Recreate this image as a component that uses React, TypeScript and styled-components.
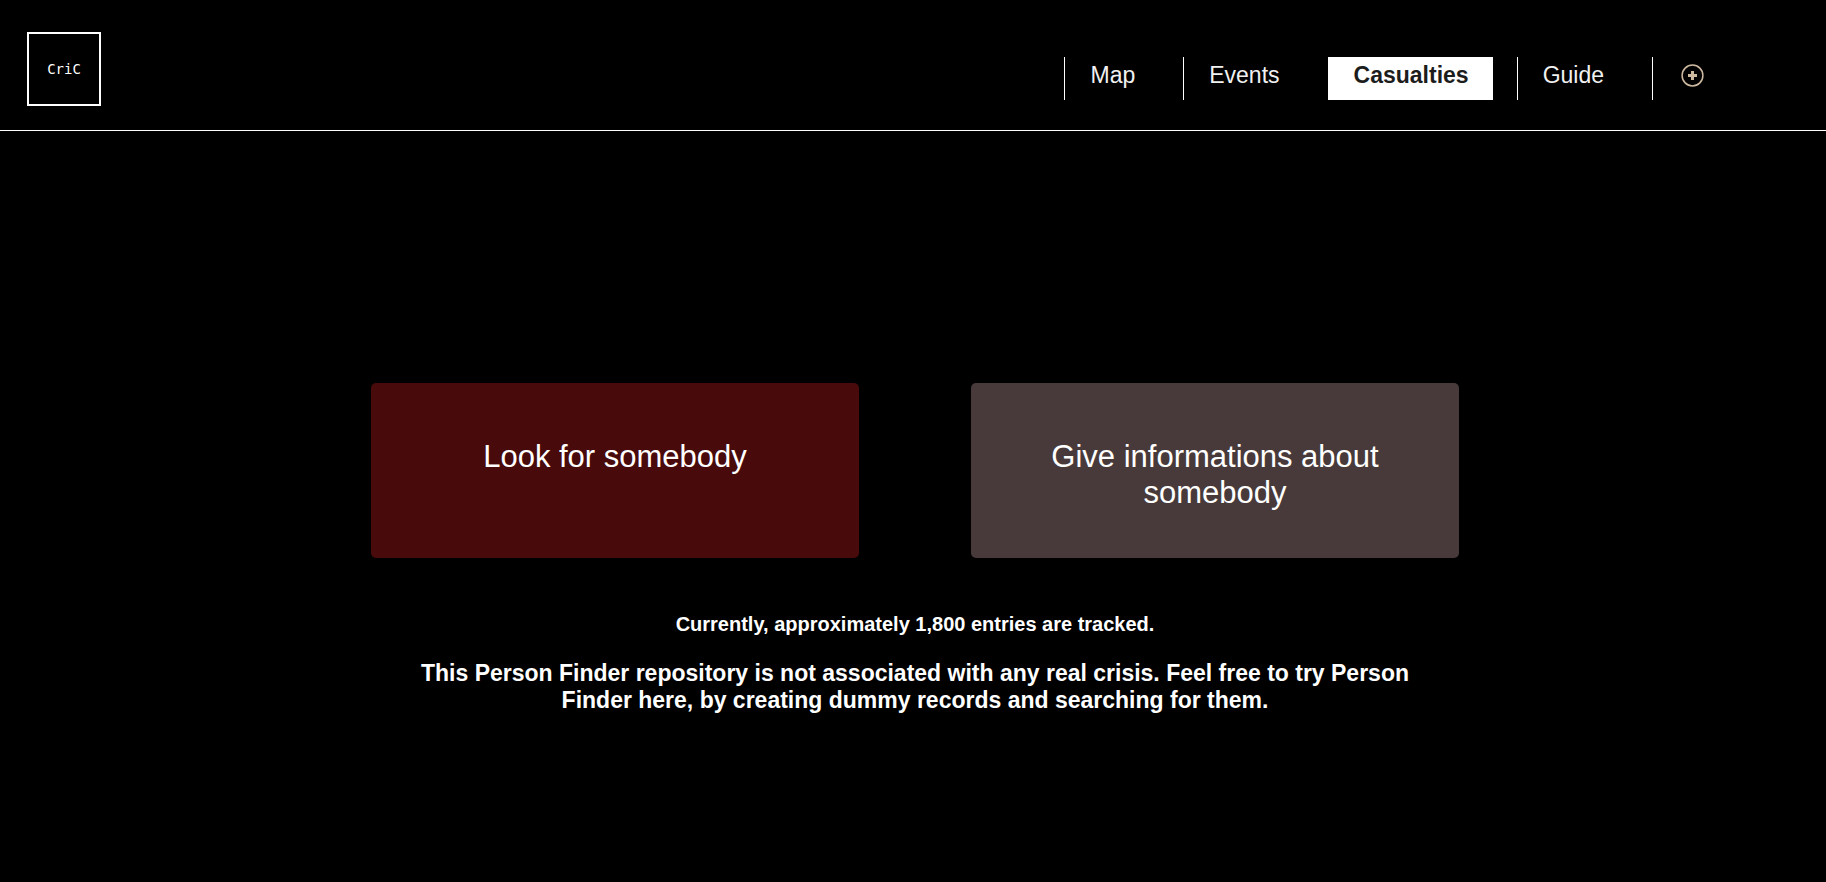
import React from 'react';
import styled, { createGlobalStyle } from 'styled-components';

const GlobalStyle = createGlobalStyle`
  *, *::before, *::after { box-sizing: border-box; }
  body {
    margin: 0;
    background: #000;
    color: #fff;
    font-family: Arial, 'Liberation Sans', sans-serif;
  }
`;

const Page = styled.div`
  display: flex;
  flex-direction: column;
  min-height: 100vh;
`;

const Header = styled.header`
  display: flex;
  justify-content: space-between;
  align-items: flex-start;
  padding: 32px 98px 24px 27px;
  border-bottom: 1px solid #fff;
`;

const Logo = styled.a`
  display: flex;
  align-items: center;
  justify-content: center;
  width: 74px;
  height: 74px;
  border: 2px solid #fff;
  color: #fff;
  font: 14px/16px 'DejaVu Sans Mono', monospace;
  text-decoration: none;
`;

const NavList = styled.ul`
  display: flex;
  gap: 24px;
  margin: 25px 0 0;
  padding: 0;
  list-style: none;
`;

const NavLink = styled.a<{ $active?: boolean }>`
  display: block;
  height: 43px;
  padding: 5px 24px 0 25px;
  border-left: 1px solid #fff;
  background: ${(p) => (p.$active ? '#fff' : 'transparent')};
  color: ${(p) => (p.$active ? '#1c1c1c' : '#f1f1f1')};
  font-size: 23px;
  font-weight: ${(p) => (p.$active ? 700 : 400)};
  line-height: 26px;
  text-decoration: none;
`;

const AddIcon = styled.svg`
  display: block;
  width: 26px;
  height: 26px;
`;

const Main = styled.main`
  display: flex;
  flex-direction: column;
  align-items: center;
  padding: 252px 0 48px 4px;
`;

const Actions = styled.div`
  display: grid;
  grid-template-columns: 1fr 1fr;
  gap: 112px;
  width: 100%;
  max-width: 1088px;
`;

const ActionButton = styled.button<{ $tone: string }>`
  display: flex;
  justify-content: center;
  align-items: flex-start;
  min-height: 175px;
  padding: 56px 56px 47px;
  border: 0;
  border-radius: 5px;
  background: ${(p) => p.$tone};
  color: #fff;
  font-family: inherit;
  font-size: 31px;
  line-height: 36px;
  text-align: center;
  cursor: pointer;
`;

const EntryCount = styled.p`
  margin: 55px 0 0;
  font-size: 20px;
  font-weight: 700;
  line-height: 23px;
`;

const Notice = styled.p`
  max-width: 1040px;
  margin: 24px 0 0;
  font-size: 23px;
  font-weight: 700;
  line-height: 27px;
  text-align: center;
`;

const links = ['Map', 'Events', 'Casualties', 'Guide'];

export default function App() {
  return (
    <Page>
      <GlobalStyle />
      <Header>
        <Logo href="#home">CriC</Logo>
        <nav aria-label="Main">
          <NavList>
            {links.map((label) => (
              <li key={label}>
                <NavLink href={`#${label.toLowerCase()}`} $active={label === 'Casualties'}>
                  {label}
                </NavLink>
              </li>
            ))}
            <li>
              <NavLink href="#add" aria-label="Add">
                <AddIcon viewBox="0 0 26 26" aria-hidden="true">
                  <circle cx="14.5" cy="13.5" r="10.4" fill="none" stroke="#cdb8a0" strokeWidth="1.5" />
                  <path d="M10 12h3V9h3v3h3v3h-3v3h-3v-3h-3z" fill="#cdb8a0" />
                </AddIcon>
              </NavLink>
            </li>
          </NavList>
        </nav>
      </Header>
      <Main>
        <Actions>
          <ActionButton type="button" $tone="#480a0a">Look for somebody</ActionButton>
          <ActionButton type="button" $tone="#483a3a">Give informations about somebody</ActionButton>
        </Actions>
        <EntryCount>Currently, approximately 1,800 entries are tracked.</EntryCount>
        <Notice>
          This Person Finder repository is not associated with any real crisis. Feel free to try Person
          Finder here, by creating dummy records and searching for them.
        </Notice>
      </Main>
    </Page>
  );
}
